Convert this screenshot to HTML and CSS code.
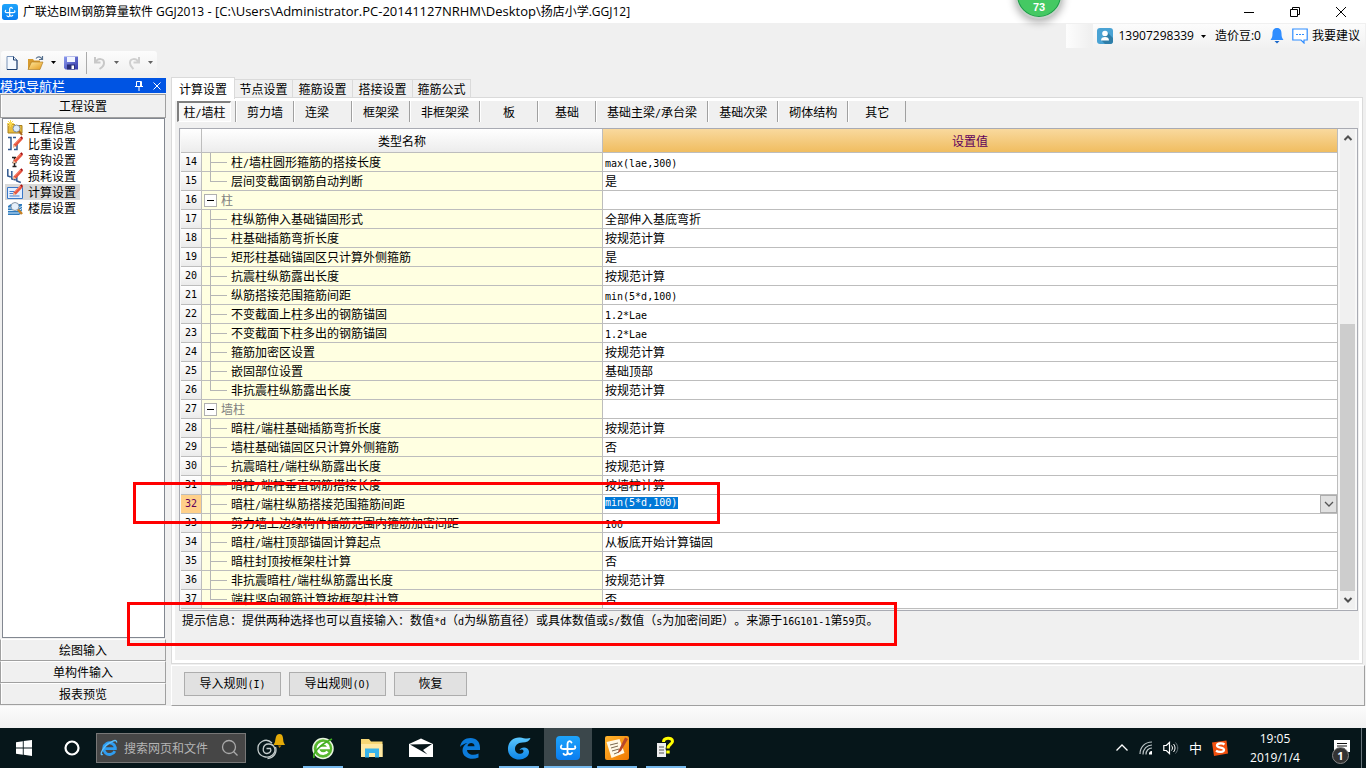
FILE: index.html
```html
<!DOCTYPE html>
<html lang="zh-CN">
<head>
<meta charset="utf-8">
<title>广联达BIM钢筋算量软件 GGJ2013</title>
<link rel="stylesheet" href="styles.css">
</head>
<body>
<svg class="defs" aria-hidden="true">
  <defs>
    <linearGradient id="blueApp" x1="0" y1="0" x2="0" y2="1"><stop offset="0" stop-color="#1ea4fb"/><stop offset="1" stop-color="#0a7df0"/></linearGradient>
    <linearGradient id="folderG" x1="0" y1="0" x2="1" y2="1"><stop offset="0" stop-color="#ffe9a0"/><stop offset="1" stop-color="#e39a1c"/></linearGradient>
    <linearGradient id="saveG" x1="0" y1="0" x2="1" y2="1"><stop offset="0" stop-color="#8d9cf0"/><stop offset="1" stop-color="#3337a8"/></linearGradient>
    <linearGradient id="orangeG" x1="0" y1="0" x2="1" y2="1"><stop offset="0" stop-color="#ffb52e"/><stop offset="1" stop-color="#f07800"/></linearGradient>
    <linearGradient id="swirlG" x1="0" y1="0" x2="0" y2="1"><stop offset="0" stop-color="#5cc8ff"/><stop offset="1" stop-color="#0b84e8"/></linearGradient>
    <symbol id="app" viewBox="0 0 24 24"><rect width="24" height="24" rx="4" fill="url(#blueApp)"/><path d="M15.500 6.500C14 4.300 11.500 5 11.500 8v8.500c0 2.800-2.800 3.200-4 1.200M5.500 9.500C4 11.500 5 13 7.500 13h9c2.500 0 3.500-1 2.500-2.800M11.500 16c.5 2.500 3 3 4.500 1" fill="none" stroke="#fff" stroke-width="1.800" stroke-linecap="round"/></symbol>
    <symbol id="pencil" viewBox="0 0 16 16"><path d="M6.500 8.500 13 1.500l2.500 2L9 10.500l-3 1z" fill="#e8553f"/><path d="M7.500 8 13.500 2" stroke="#ff9d86" fill="none"/><path d="M13 1.500 14.500.3 16 2l-.8 1.500z" fill="#a80d0d"/><path d="m6 11.500.5-3L9 10.500z" fill="#f0c8a0"/></symbol>
    <symbol id="mag" viewBox="0 0 16 16"><path d="m10.500 9 4.500 5" stroke="#c98224" stroke-width="2.500"/><circle cx="8" cy="6.500" r="4" fill="#e5f0fb" stroke="#8b98a8"/></symbol>
  </defs>
</svg>

<header class="titlebar">
  <svg class="i16" viewBox="0 0 24 24"><use href="#app"/></svg>
  <h1>广联达BIM钢筋算量软件 GGJ2013<span class="path"> - [C:\Users\Administrator.PC-20141127NRHM\Desktop\</span>扬店小学.GGJ12]</h1>
  <div class="window-buttons">
    <button aria-label="最小化"><svg class="i12" viewBox="0 0 12 12"><path d="M1 6.500h10" class="ink"/></svg></button>
    <button aria-label="还原"><svg class="i12" viewBox="0 0 12 12"><path d="M1.500 3.500h7v7h-7zM3.500 3.500v-2h7v7h-2" class="ink"/></svg></button>
    <button aria-label="关闭"><svg class="i12" viewBox="0 0 12 12"><path d="m1 1 10 10M11 1 1 11" class="ink"/></svg></button>
  </div>
</header>
<div class="speed">73</div>

<div class="bars">
  <div class="account">
    <span class="grip"></span>
    <div class="account-bar">
      <svg class="i16" viewBox="0 0 16 16"><rect width="16" height="16" rx="3" fill="#4aa3d4"/><path d="m10 4 6 6v3a3 3 0 0 1-3 3H8l-4-4z" fill="#2f7ea8"/><circle cx="8" cy="5.500" r="2.800" fill="#fff"/><path d="M4 12.500c0-2.500 1.500-3.500 4-3.500s4 1 4 3.500z" fill="#fff"/></svg>
      <button class="plain">13907298339<svg class="drop" viewBox="0 0 5 3"><path d="M0 0h5L2.500 3z"/></svg></button>
      <span class="beans">造价豆:0</span>
      <svg class="i16" viewBox="0 0 16 16"><path d="M8 0c3.500 0 4.500 2.500 4.500 5.500 0 3 .5 4.500 2 6.500h-13c1.500-2 2-3.500 2-6.500C3.500 2.500 4.500 0 8 0z" fill="#2f8dff"/><path d="M5.500 13h5L8 15.500z" fill="#1866c8"/></svg>
      <a href="#" class="suggest"><svg class="i16" viewBox="0 0 16 16"><path d="M.8 1h14.400v11H12v3l-3-3H.8z" fill="#fff" stroke="#2f8dff" stroke-width="1.200"/><path d="M4 6.500h2m1 0h2m1 0h2" stroke="#2f8dff"/></svg>我要建议</a>
    </div>
  </div>
  <div class="quick">
    <button aria-label="新建"><svg class="i16" viewBox="0 0 16 16"><path d="M3 1.500h6.500L13 5v9.500H3z" fill="#f4f9ff" stroke="#7a94b8"/><path d="M9.500 1.500V5H13v9.500H3" fill="none" stroke="#1e3f6e"/></svg></button>
    <button aria-label="打开" class="split"><svg class="i18" viewBox="0 0 18 16"><path d="M1 4h5l1 1.500h6V14H1z" fill="#d79b2f"/><path d="M1 14.500 4.500 7H16l-3 7.500z" fill="url(#folderG)" stroke="#a8741a" stroke-width=".6"/><path d="M9 3.500c2-2.500 4.500-2 6 .5M15.500 1v3.500H12" fill="none" stroke="#56708e" stroke-width="1.200"/></svg><svg class="drop" viewBox="0 0 5 3"><path d="M0 0h5L2.500 3z"/></svg></button>
    <button aria-label="保存"><svg class="i16" viewBox="0 0 16 16"><path d="M1 1.500h14v13H2.500L1 13z" fill="url(#saveG)"/><path d="M4 2h8v5H4z" fill="#f2f5ff"/><path d="M4 9.500h8v5H4z" fill="#2a2f78"/><path d="M8.500 10.500h2.500v3.500H8.500z" fill="#fff"/></svg></button>
    <span class="rule"></span>
    <button aria-label="撤销" class="split"><svg class="i16" viewBox="0 0 16 16"><path d="M3 2v5.500h5.500M3.500 7C6 3 12 3 12 8c0 3-2 4.500-4.500 6" fill="none" stroke="#c8c8c8" stroke-width="2"/></svg><svg class="drop dim" viewBox="0 0 5 3"><path d="M0 0h5L2.500 3z"/></svg></button>
    <button aria-label="重做" class="split"><svg class="i16" viewBox="0 0 16 16"><path d="M13 2v5.500H7.500M12.500 7C10 3 4 3 4 8c0 3 2 4.500 3.500 6" fill="none" stroke="#cfcfcf" stroke-width="2"/></svg><svg class="drop dim" viewBox="0 0 5 3"><path d="M0 0h5L2.500 3z"/></svg></button>
  </div>
</div>

<main class="work">
  <aside class="nav">
    <div class="nav-head"><h2>模块导航栏</h2>
      <button aria-label="固定"><svg class="i10" viewBox="0 0 10 10"><path d="M2.500.5h5v5h-5zM6.500.5v5M1 5.500h8M5 5.500V10" fill="none" stroke="#fff"/></svg></button>
      <button aria-label="关闭"><svg class="i10" viewBox="0 0 10 10"><path d="m1.500 1.500 7 7m0-7-7 7" fill="none" stroke="#fff"/></svg></button>
    </div>
    <button class="section">工程设置</button>
    <ul class="nav-list">
      <li><a href="#"><svg class="i16" viewBox="0 0 16 16"><path d="M1 4h6l1 1.500h7V13H1z" fill="#e9bd3c" stroke="#a87f1e"/><path d="M3.500 0v7M0 3.500h7M1 1l5 5m0-5L1 6" stroke="#f7d84f"/><circle cx="9.500" cy="8.500" r="3.500" fill="#dcebfa" stroke="#7e8ea0"/><path d="m12 11 3 4" stroke="#a8661c" stroke-width="2"/></svg>工程信息</a></li>
      <li><a href="#"><svg class="i16" viewBox="0 0 16 16"><path d="M1 1.500h3v12H1m5-12h3m-2 12h3v-6" fill="none" stroke="#31588f" stroke-width="1.500"/><use href="#pencil"/></svg>比重设置</a></li>
      <li><a href="#"><svg class="i16" viewBox="0 0 16 16"><path d="M5 5.500h4M7.500 6v9M5.500 10.500h4M5.500 14.500h4" stroke="#222" stroke-width="1.500"/><use href="#pencil"/></svg>弯钩设置</a></li>
      <li><a href="#"><svg class="i16" viewBox="0 0 16 16"><path d="M.8 1v7l3 1m1-6v8l4 1m1-5v6l4 1.500" fill="none" stroke="#31588f" stroke-width="1.500"/><use href="#pencil"/></svg>损耗设置</a></li>
      <li><a href="#" class="current"><svg class="i16" viewBox="0 0 16 16"><path d="M.5 3.500h15v11H.5z" fill="#e2eeff" stroke="#3a78c8"/><path d="M2.500 7.500h6m-6 2h5m-5 2.500h10" stroke="#4a80cc"/><use href="#pencil"/></svg>计算设置</a></li>
      <li><a href="#"><svg class="i16" viewBox="0 0 16 16"><path d="m1 6 3-2h11l-2 2zM1 6h11v9H1zM12 6l3-2v9l-3 2" fill="#2f7bbd"/><path d="M1 8h11l3-2M1 10.500h11l3-2M1 13h11l3-2" fill="none" stroke="#d5ebfb"/><use href="#mag"/></svg>楼层设置</a></li>
    </ul>
    <button class="section">绘图输入</button>
    <button class="section">单构件输入</button>
    <button class="section">报表预览</button>
  </aside>

  <section class="content">
    <nav class="tabs">
      <button class="on">计算设置</button><button class="edge">节点设置</button><button>箍筋设置</button><button>搭接设置</button><button class="edge">箍筋公式</button>
    </nav>
    <div class="pane">
      <nav class="subtabs">
        <button class="on">柱<span class="n">/</span>墙柱</button><button>剪力墙</button><button class="lean">连梁</button><button>框架梁</button><button>非框架梁</button><button>板</button><button>基础</button><button>基础主梁<span class="n">/</span>承台梁</button><button>基础次梁</button><button>砌体结构</button><button>其它</button>
      </nav>
      <div class="grid">
        <table>
          <colgroup><col class="c-num"><col class="c-name"><col></colgroup>
          <thead><tr><th></th><th>类型名称</th><th class="hot">设置值</th></tr></thead>
          <tbody>
            <tr><th>14</th><td class="k">柱<span class="n">/</span>墙柱圆形箍筋的搭接长度</td><td><span class="n">max(lae,300)</span></td></tr>
            <tr><th>15</th><td class="k end">层间变截面钢筋自动判断</td><td>是</td></tr>
            <tr><th>16</th><td class="g"><button aria-label="折叠"></button>柱</td><td></td></tr>
            <tr><th>17</th><td class="k">柱纵筋伸入基础锚固形式</td><td>全部伸入基底弯折</td></tr>
            <tr><th>18</th><td class="k">柱基础插筋弯折长度</td><td>按规范计算</td></tr>
            <tr><th>19</th><td class="k">矩形柱基础锚固区只计算外侧箍筋</td><td>是</td></tr>
            <tr><th>20</th><td class="k">抗震柱纵筋露出长度</td><td>按规范计算</td></tr>
            <tr><th>21</th><td class="k">纵筋搭接范围箍筋间距</td><td><span class="n">min(5*d,100)</span></td></tr>
            <tr><th>22</th><td class="k">不变截面上柱多出的钢筋锚固</td><td><span class="n">1.2*Lae</span></td></tr>
            <tr><th>23</th><td class="k">不变截面下柱多出的钢筋锚固</td><td><span class="n">1.2*Lae</span></td></tr>
            <tr><th>24</th><td class="k">箍筋加密区设置</td><td>按规范计算</td></tr>
            <tr><th>25</th><td class="k">嵌固部位设置</td><td>基础顶部</td></tr>
            <tr><th>26</th><td class="k end">非抗震柱纵筋露出长度</td><td>按规范计算</td></tr>
            <tr><th>27</th><td class="g"><button aria-label="折叠"></button>墙柱</td><td></td></tr>
            <tr><th>28</th><td class="k">暗柱<span class="n">/</span>端柱基础插筋弯折长度</td><td>按规范计算</td></tr>
            <tr><th>29</th><td class="k">墙柱基础锚固区只计算外侧箍筋</td><td>否</td></tr>
            <tr><th>30</th><td class="k">抗震暗柱<span class="n">/</span>端柱纵筋露出长度</td><td>按规范计算</td></tr>
            <tr><th>31</th><td class="k">暗柱<span class="n">/</span>端柱垂直钢筋搭接长度</td><td>按墙柱计算</td></tr>
            <tr class="editing"><th>32</th><td class="k">暗柱<span class="n">/</span>端柱纵筋搭接范围箍筋间距</td><td><div class="editor"><input class="n" value="min(5*d,100)" aria-label="设置值"><button aria-label="展开"><svg class="i10" viewBox="0 0 10 10"><path d="m1 3 4 4 4-4" fill="none" stroke="#555" stroke-width="1.300"/></svg></button></div></td></tr>
            <tr><th>33</th><td class="k">剪力墙上边缘构件插筋范围内箍筋加密间距</td><td><span class="n">100</span></td></tr>
            <tr><th>34</th><td class="k">暗柱<span class="n">/</span>端柱顶部锚固计算起点</td><td>从板底开始计算锚固</td></tr>
            <tr><th>35</th><td class="k">暗柱封顶按框架柱计算</td><td>否</td></tr>
            <tr><th>36</th><td class="k">非抗震暗柱<span class="n">/</span>端柱纵筋露出长度</td><td>按规范计算</td></tr>
            <tr><th>37</th><td class="k end">端柱竖向钢筋计算按框架柱计算</td><td>否</td></tr>
          </tbody>
        </table>
        <div class="scroll">
          <button aria-label="向上"><svg class="i10" viewBox="0 0 10 10"><path d="m1.500 7 3.500-3.500L8.500 7" fill="none" stroke="#505050" stroke-width="2"/></svg></button>
          <span class="track"></span><span class="thumb"></span>
          <button aria-label="向下"><svg class="i10" viewBox="0 0 10 10"><path d="M1.500 3 5 6.500 8.500 3" fill="none" stroke="#505050" stroke-width="2"/></svg></button>
        </div>
      </div>
      <p class="hint">提示信息：提供两种选择也可以直接输入：数值<span class="n">*d</span>（<span class="n">d</span>为纵筋直径）或具体数值或<span class="n">s/</span>数值（<span class="n">s</span>为加密间距）。来源于<span class="n">16G101-1</span>第<span class="n">59</span>页。</p>
    </div>
    <div class="actions">
      <button>导入规则<span class="n">(I)</span></button><button>导出规则<span class="n">(O)</span></button><button class="short">恢复</button>
    </div>
  </section>
  <div class="mark mark-row"></div>
  <div class="mark mark-hint"></div>
</main>
<div class="status"></div>

<footer class="taskbar">
  <button class="task" aria-label="开始"><svg class="i16" viewBox="0 0 16 16"><path d="M0 2.200 6.800 1.200v6.300H0zM7.700 1.100 16 0v7.500H7.700zM0 8.400h6.800v6.400L0 13.800zM7.700 8.400H16V16l-8.300-1.200z" fill="#fff"/></svg></button>
  <button class="task" aria-label="Cortana"><svg class="i16" viewBox="0 0 16 16"><circle cx="8" cy="8" r="6.500" fill="none" stroke="#fff" stroke-width="2.200"/></svg></button>
  <div class="search">
    <svg class="i18" viewBox="0 0 20 20"><path d="M16.500 13.500A6.500 6.500 0 1 1 17 9.500v1.200H5.500" fill="none" stroke="#2f9df0" stroke-width="3.200"/><path d="M3 17c-3 2-2-4 3-9S19-1 18.500 4" fill="none" stroke="#5cc0ff" stroke-width="1.500"/></svg>
    <input placeholder="搜索网页和文件" aria-label="搜索网页和文件">
    <svg class="i18" viewBox="0 0 18 18"><circle cx="8" cy="8" r="6.500" fill="none" stroke="#aaa" stroke-width="1.300"/><path d="m12.500 12.500 4 4" stroke="#aaa" stroke-width="1.300"/></svg>
  </div>
  <button class="task first" aria-label="提醒"><svg class="i30" viewBox="0 0 30 30"><g fill="none" stroke="#c4cccc" stroke-width="1.300"><path d="M17 10C11 4 2 9 3 17c1 7 10 9 14.500 5S20 11 13.500 11 6.500 21 12 20.500c3.500-.3 4.500-3 3.500-5h-4"/><path d="M20.500 14c2 6-2 11-8 11.500"/></g><path d="M24.500 1c4 0 3.500 5 4 8l1.500 3H18.500l1.500-3c.7-3 .5-8 4.500-8z" fill="#e5ab08"/><path d="M23 12.500h3.500L24.500 15z" fill="#b87d00"/></svg></button>
  <button class="task run" aria-label="360浏览器"><svg class="i24" viewBox="0 0 24 24"><circle cx="12" cy="12.500" r="10" fill="#58b72e" stroke="#e8f5df" stroke-width="1.500"/><path d="M16.500 15.500a5.300 5.300 0 1 1 1-3.500H8" fill="none" stroke="#fff" stroke-width="2.700"/><path d="M3 22c-2-5 7-14 18-19" fill="none" stroke="#3fae20" stroke-width="1.800"/></svg></button>
  <button class="task" aria-label="文件资源管理器"><svg class="i24" viewBox="0 0 24 24"><path d="M1 3h8l2 2.500h11.500V21H1z" fill="#f7d775"/><path d="M1 8h21.500v13H1z" fill="#ffe9a3"/><path d="M5 21.500v-9h14v9h-4v-4.500H9v4.500z" fill="#39b4ea"/></svg></button>
  <button class="task" aria-label="邮件"><svg class="i24" viewBox="0 0 24 24"><path d="M0 8 12 2.500 24 8v13H0z" fill="#fff"/><path d="m1 8.500 22-.5-9 6 4.500 4.500L1 8.500z" fill="#07161a"/></svg></button>
  <button class="task" aria-label="Edge"><svg class="i24" viewBox="0 0 24 24"><path d="M2 11C3 5 7 2 12.500 2 18.500 2 22 6 22 11.500V14H9c.2 4.500 6 6.300 11.500 3.500v4C13 25 4.500 21.500 4.500 14.500 4.500 11 6.500 8.500 9.500 7 6.500 7.500 3.500 9 2 11zm7.500-.7h7c0-4.300-6.300-4.500-7 0z" fill="#0c7bda"/></svg></button>
  <button class="task run" aria-label="G"><svg class="i24" viewBox="0 0 24 24"><path d="M23.500 2c-1 3-4 4.500-8 4.500-5 0-7.500 3-7.500 6.500s3.500 5.500 6.500 4.500c2-.6 2.500-2.500 1.500-3.500-1-.8-2.500-.5-3.500 0 1.500-3.500 9-3.500 9.500 1.500.4 5-5 8-9.500 8C5 23.500.5 18.500 1 12 1.500 5 7 1 13 1.500c4 .7 7 1.500 10.500.5z" fill="url(#swirlG)"/></svg></button>
  <button class="task run active" aria-label="GGJ2013"><svg class="i24" viewBox="0 0 24 24"><use href="#app"/></svg></button>
  <button class="task run" aria-label="笔记"><svg class="i24" viewBox="0 0 24 24"><rect width="24" height="24" rx="2" fill="url(#orangeG)"/><path d="m1.500 6 13-3 5 14-13 5z" fill="#fff8e6"/><path d="m5 9 8-2m-7 5 7-2m-6 5 7-2m-5 5 5-2" stroke="#7b6a50"/><path d="m13.500 14.500 6.500-13 3 1.500-7 12-3 2z" fill="#b7472a"/></svg></button>
  <button class="task run" aria-label="帮助"><svg class="i24" viewBox="0 0 24 24"><path d="M3 7h9v14H3z" fill="#eee"/><path d="M5 11h5m-5 3h5m-5 3h5" stroke="#555"/><path d="M9 6.500c0-5.500 10-5.500 10-1 0 3.500-5 3.500-5 8" fill="none" stroke="#111" stroke-width="5"/><path d="M9.500 6c0-5 9-5 9-.8 0 3.300-4.500 3-4.500 7.300" fill="none" stroke="#ff0" stroke-width="3"/><path d="M12.300 14.500h3.400v3h-3.400z" fill="#ff0"/></svg></button>
  <div class="tray">
    <svg class="i14" viewBox="0 0 14 14"><path d="m1.500 9.500 5.500-5.500 5.500 5.500" fill="none" stroke="#fff" stroke-width="1.300"/></svg>
    <svg class="i14" viewBox="0 0 14 14"><g fill="none" stroke="#bcc5c7" stroke-width="1.200"><path d="M1 13C1 6 6 1 13 1M4 13.500C4 8 8 4 13 4M7 13.500C7 9.500 9.500 7 13 7"/></g><path d="M10 13.500v-1.500a3 3 0 0 1 3-2v3.500z" fill="#fff"/></svg>
    <svg class="i16" viewBox="0 0 16 14"><path d="M.8 4.500h2.500L6.500 1.500v11l-3.200-3H.8z" fill="none" stroke="#fff" stroke-width="1.200"/><path d="M8.500 4.500c1.300 1.500 1.300 3.500 0 5M10.500 3c2 2.500 2 5.500 0 8" fill="none" stroke="#fff"/><path d="M12.500 1.500c3 3.500 3 7.500 0 11" fill="none" stroke="#67747a"/></svg>
    <span class="ime">中</span>
    <svg class="i16" viewBox="0 0 16 16"><path d="M0 2.500 14.500.5 16 13.500 2 16z" fill="#f2500f"/><path d="M12.500 4.500c-2-1.500-7.500-1.500-7.500 1 0 2.800 7 1.500 7 4.300 0 2.700-5.500 2.500-8 1" fill="none" stroke="#fff" stroke-width="2.300"/></svg>
    <time class="clock">19:05<br>2019/1/4</time>
    <div class="notice"><svg class="i18" viewBox="0 0 18 18"><path d="M1 1h16v12H9l-4 4v-4H1z" fill="#fff"/><path d="M4 4.500h10M4 7h10M4 9.500h8" stroke="#111"/></svg><b>1</b></div>
  </div>
</footer>
</body>
</html>
```
FILE: styles.css
```css
* { box-sizing: border-box; }
body {
  margin: 0;
  min-height: 100vh;
  display: flex;
  flex-direction: column;
  background: #f0f0f0;
  color: #000;
  font: 12px/18px "Noto Sans CJK SC", sans-serif;
  position: relative;
  white-space: nowrap;
}
button, input { font: inherit; color: inherit; border: 0; padding: 0; margin: 0; background: none; }
h1, h2, p, ul { margin: 0; padding: 0; font: inherit; list-style: none; }
a { color: inherit; text-decoration: none; }
svg { display: block; flex: none; }
.defs { position: absolute; width: 0; height: 0; }
.i10 { width: 10px; height: 10px; }
.i12 { width: 12px; height: 12px; }
.i14 { width: 14px; height: 14px; }
.i16 { width: 16px; height: 16px; }
.i18 { width: 18px; height: 18px; }
.i24 { width: 24px; height: 24px; }
.i30 { width: 30px; height: 30px; }
.ink { fill: none; stroke: #000; }
.n { font: 10px/12px "DejaVu Sans Mono", monospace; }
.drop { width: 5px; height: 3px; }
.dim { opacity: .6; }

/* title bar */
.titlebar { display: flex; align-items: center; gap: 5px; height: 23px; padding-left: 2px; background: #fff; }
.titlebar h1 { flex: 1; font: 12px/18px "Open Sans", "Noto Sans CJK SC", sans-serif; white-space: pre; }
.path { font-size: 13px; }
.window-buttons { display: flex; padding-right: 2px; }
.window-buttons button { width: 46px; height: 20px; display: grid; place-items: center; }
.speed {
  position: absolute; top: -29px; right: 303px; width: 48px; height: 48px; padding-top: 26px;
  border: 2px solid #c9cfcb; border-radius: 50%; background: #45c963;
  box-shadow: inset 0 0 0 1px #1d9a4a, 0 3px 8px #0005;
  color: #fff; font: bold 11px/16px "Liberation Sans", sans-serif; text-align: center;
}

/* toolbars */
.bars { height: 54px; display: flex; flex-direction: column; gap: 3px; padding: 1px 0; }
.account { display: flex; justify-content: flex-end; gap: 3px; height: 24px; padding-right: 1px; }
.grip { width: 24px; background: linear-gradient(90deg, #fdfdfd, #f0f0f0); }
.account-bar { display: flex; align-items: center; padding: 0 5px 0 4px; background: linear-gradient(#fcfcfc, #f1f1f1); font-family: "Open Sans", "Noto Sans CJK SC", sans-serif; }
.account-bar .plain { display: flex; align-items: center; gap: 7px; margin: 0 9px 0 5px; }
.beans { margin-right: 8px; }
.suggest { display: flex; align-items: center; gap: 4px; margin-left: 7px; }
.quick { display: flex; align-items: center; align-self: flex-start; height: 23px; margin-left: 1px; padding: 0 4px 0 3px; border-radius: 3px; background: linear-gradient(#fcfcfc, #f1f1f1); }
.quick button { display: flex; align-items: center; gap: 6px; margin-right: 7px; }
.quick .rule { width: 1px; height: 22px; margin-right: 5px; background: #aaa; }
.quick .split:last-child { margin-right: 0; }

/* work area */
.work { position: relative; flex: 1; display: flex; gap: 5px; padding-right: 1px; }
.nav { width: 166px; display: flex; flex-direction: column; padding: 1px 0; }
.nav-head { display: flex; align-items: center; gap: 8px; height: 15px; margin-bottom: 1px; padding-right: 4px; background: #0054e3; color: #fff; }
.nav-head h2 { flex: 1; font-size: 13px; line-height: 15px; }
.section { height: 22px; border: 1px solid #a0a0a0; border-top-color: #fff; box-shadow: inset 1px 0 #fff; text-align: center; }
.nav-head + .section { height: 24px; border-top-color: #a0a0a0; }
.nav-list { flex: 1; margin: 0 1px 1px 2px; padding: 1px 2px; border: 1px solid #828790; background: #fff; }
.nav-list a { display: inline-flex; align-items: center; gap: 5px; height: 16px; padding: 0 4px 0 2px; line-height: 16px; vertical-align: top; }
.nav-list li { height: 16px; }
.nav-list .current { background: #d9d9d9; }

.content { flex: 1; min-width: 0; display: flex; flex-direction: column; }
.tabs { display: flex; align-items: flex-end; height: 20px; }
.tabs button { height: 18px; width: 60px; border: 1px solid #dadada; border-left: 0; border-bottom: 0; }
.tabs .edge { width: 58px; }
.tabs .on { position: relative; width: 64px; height: 22px; margin-bottom: -2px; border-left: 1px solid #dadada; background: #fff; }
.pane { flex: 1; display: flex; flex-direction: column; margin-right: 2px; padding: 0 4px 0 5px; border: 1px solid #dadada; box-shadow: inset 0 0 0 3px #fff; }
.subtabs { display: flex; height: 25px; padding-top: 3px; margin-bottom: 5px; }
.subtabs button { min-width: 58px; padding: 0 10px 0 11px; height: 21px; border-right: 1px solid #a0a0a0; box-shadow: inset 1px 0 #fff; }
.subtabs .on { min-width: 54px; padding: 0 4px; margin-right: 5px; border: 1px solid #fff; border-top: 2px solid #808080; border-left: 2px solid #808080; background: #f8f8f8; box-shadow: 4px 0 #f0f0f0, 5px 0 #a0a0a0; }
.subtabs .lean { padding-right: 22px; }

.grid { display: flex; margin: 0 0 0 2px; padding: 0 2px 1px 1px; border: 1px solid #a9abb3; background: #f8f8f8; }
table { flex: 1; table-layout: fixed; width: 100%; border-spacing: 0; background: #fff; }
.c-num { width: 21px; }
.c-name { width: 401px; }
th, td { height: 19px; padding: 0; border: 0 solid #bdbdbd; border-width: 0 1px 1px 0; text-align: left; font-weight: 400; line-height: 18px; }
thead th { height: 24px; text-align: center; background: linear-gradient(#fff, #ececec); }
thead .hot { background: linear-gradient(#f9d99e, #f0bd60); color: #60005c; }
tbody th { text-align: center; background: linear-gradient(#fff, #ebebeb); font: 10px/16px "DejaVu Sans Mono", monospace; }
tbody td { padding-left: 2px; }
td.k { position: relative; padding-left: 29px; background: #ffffe1; }
td.k::before, td.k::after { content: ""; position: absolute; left: 8px; top: 0; background: #b5b5b5; }
td.k::before { width: 1px; height: 19px; }
td.k.end::before { height: 10px; }
td.k::after { top: 9px; width: 17px; height: 1px; }
td.g { background: #ffffe1; color: #808080; }
td.g button { width: 13px; height: 13px; margin: 3px 4px 0 0; border: 1px solid #b0b0b0; background: linear-gradient(#000, #000) center / 7px 1px no-repeat #fff; vertical-align: top; }
.editing th { background: #ffd08a; color: #60005c; }
.editor { display: flex; justify-content: space-between; height: 18px; }
.editor input { width: 73px; height: 12px; margin-top: 2px; background: #0078d7; color: #fff; }
.editor button { width: 17px; height: 18px; display: grid; place-items: center; border: 1px solid #adadad; background: #e1e1e1; }
.scroll { display: flex; flex-direction: column; width: 15px; margin-left: 2px; background: #f0f0f0; }
.scroll button { height: 18px; display: grid; place-items: center; }
.track { flex: 177; }
.thumb { flex: 268; background: #cdcdcd; }
.hint { padding: 0 5px; text-spacing-trim: space-all; }

.actions { display: flex; gap: 8px; height: 41px; margin-top: 1px; padding: 6px 12px; border: 1px solid #a0a0a0; border-color: #fff #a0a0a0 #a0a0a0 #fff; }
.actions button { width: 97px; height: 24px; padding-bottom: 2px; border: 1px solid #adadad; background: #e1e1e1; }
.actions .short { width: 73px; }

/* highlighted regions */
.mark { position: absolute; border: 3px solid #f00; pointer-events: none; }
.mark-row { left: 133px; top: 405px; width: 587px; height: 42px; }
.mark-hint { left: 127px; top: 525px; width: 770px; height: 44px; }

.status { height: 22px; background: linear-gradient(#fcfcfc, #f1f1f1); }

/* taskbar */
.taskbar { display: flex; align-items: center; height: 40px; background: #06161a; color: #fff; }
.task { display: grid; place-items: center; width: 48px; height: 40px; margin-right: 1px; }
.task:nth-child(-n+2) { margin-right: 0; }
.task.first { margin-right: 5px; }
.task.run { background: linear-gradient(#76b9ed, #76b9ed) center bottom / 40px 2px no-repeat; }
.task.active { background-size: 48px 2px; background-color: #3b474b; }
.search { display: flex; align-items: center; gap: 6px; width: 150px; height: 30px; padding: 0 6px 0 3px; border: 1px solid #777; background: #464646; }
.search input { flex: 1; min-width: 0; }
.search input::placeholder { color: #b5b5b5; opacity: 1; }
.tray { display: flex; align-items: center; gap: 10px; margin-left: auto; height: 40px; padding-right: 4px; font-family: "Open Sans", "Noto Sans CJK SC", sans-serif; }
.ime { font-size: 13px; }
.clock { width: 74px; margin-right: 2px; line-height: 19px; text-align: center; }
.notice { position: relative; width: 38px; padding: 0 9px; height: 40px; display: flex; align-items: center; border-right: 1px solid #67747a; }
.notice b { position: absolute; right: 12px; bottom: 4px; width: 17px; height: 17px; border: 1px solid #888; border-radius: 50%; background: #333; font: bold 11px/15px "Open Sans", sans-serif; text-align: center; }
```
